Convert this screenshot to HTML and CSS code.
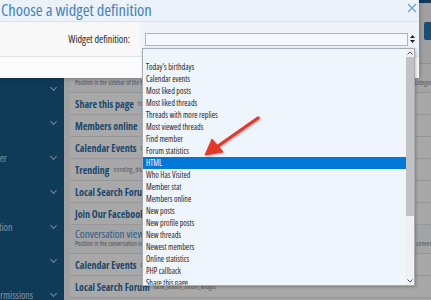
FILE: index.html
```html
<!DOCTYPE html>
<html lang="en">
<head>
<meta charset="UTF-8" />
<meta name="viewport" content="width=device-width, initial-scale=1.0" />
<title>Widgets</title>
<link rel="stylesheet" href="styles.css">
</head>
<body>
<div class="topbar"></div>
<div class="layout">
    <nav class="sidebar">
    <div class="nav-item"><span>Setup</span></div>
    <div class="nav-item"><span>Options</span></div>
    <div class="nav-item"><span>Forums</span></div>
    <div class="nav-item"><span>Nodes</span></div>
    <div class="nav-item"><span>Style manager</span></div>
    <div class="nav-item"><span>Styles</span></div>
    <div class="nav-item"><span>Communication</span></div>
    <div class="nav-item"><span>Tools</span></div>
    <div class="nav-item"><span>Groups &amp; permissions</span></div>
    </nav>

    <main class="main">
    <div class="page-head">
        <h2>Widgets</h2>
        <button class="btn">Add widget</button>
    </div>

    <div class="panel">
        <div class="section-row">
        <div class="section-title">Forum list sidebar</div>
        <div class="section-desc"><span>Position in the sidebar of the forum list</span><span class="end">category</span></div>
        </div>
        <div class="row"><b>Share this page</b><span>forum_overview_share_page</span></div>
        <div class="row"><b>Members online</b><span>forum_overview_members_online</span></div>
        <div class="row"><b>Calendar Events</b><span>calendar_events_sidebar</span></div>
        <div class="row"><b>Trending</b><span>trending_discussions</span></div>
        <div class="row"><b>Local Search Forum</b><span>local_search_forum_widget</span></div>
        <div class="row"><b>Join Our Facebook</b><span>join_facebook_group</span></div>
        <div class="section-row">
        <div class="section-title">Conversation view</div>
        <div class="section-desc"><span>Position in the conversation view sidebar</span><span class="cut">conversation</span></div>
        </div>
        <div class="row"><b>Calendar Events</b><span>calendar_events_conversation</span></div>
        <div class="row"><b>Local Search Forum</b><span>local_search_forum_widget</span></div>
    </div>
    </main>
</div>

<div class="overlay"></div>

<div class="modal">
    <div class="modal-title">
    <h1>Choose a widget definition</h1>
    <svg class="close" width="10" height="10" viewBox="0 0 10 10">
        <path d="M1 1 L9 9 M9 1 L1 9" stroke="#78a6d4" stroke-width="1.5" fill="none" />
    </svg>
    </div>
    <div class="form-row">
    <div class="form-label">Widget definition:</div>
    <div class="form-field">
        <div class="select"></div>
        <svg class="spin" width="5" height="8" viewBox="0 0 5 8">
        <path d="M2.5 0 L5 3 L0 3 Z M0 5 L5 5 L2.5 8 Z" fill="#222" />
        </svg>
    </div>
    </div>
    <div class="modal-footer"></div>
</div>

<div class="dropdown">
    <ul class="options">
    <li>&nbsp;</li>
    <li>Today's birthdays</li>
    <li>Calendar events</li>
    <li>Most liked posts</li>
    <li>Most liked threads</li>
    <li>Threads with more replies</li>
    <li>Most viewed threads</li>
    <li>Find member</li>
    <li>Forum statistics</li>
    <li class="selected">HTML</li>
    <li>Who Has Visited</li>
    <li>Member stat</li>
    <li>Members online</li>
    <li>New posts</li>
    <li>New profile posts</li>
    <li>New threads</li>
    <li>Newest members</li>
    <li>Online statistics</li>
    <li>PHP callback</li>
    <li>Share this page</li>
    </ul>
    <div class="scrollbar">
    <div class="sb-btn">
        <svg width="6" height="4" viewBox="0 0 6 4"><path d="M0.5 3.5 L3 1 L5.5 3.5" stroke="#555" stroke-width="1" fill="none" /></svg>
    </div>
    <div class="sb-thumb"></div>
    <div class="sb-track"></div>
    <div class="sb-btn">
        <svg width="6" height="4" viewBox="0 0 6 4"><path d="M0.5 0.5 L3 3 L5.5 0.5" stroke="#555" stroke-width="1" fill="none" /></svg>
    </div>
    </div>
</div>

<svg class="pointer" width="75" height="55" viewBox="0 0 75 55">
    <line x1="63" y1="8" x2="23" y2="36" stroke="#e3392b" stroke-width="3.2" stroke-linecap="round" />
    <path d="M10 45 L28 42 L17 29 Z" fill="#e3392b" stroke="#e3392b" stroke-width="1" stroke-linejoin="round" />
</svg>
</body>
</html>
```

FILE: styles.css
```css
:root {
--blue: #185886;
--link: #2e6fa6;
--narrow: 82%;
}

body {
margin: 0;
width: 431px;
height: 300px;
overflow: hidden;
position: relative;
font-family: 'Open Sans', 'Noto Sans', sans-serif;
font-stretch: var(--narrow);
background: #f3f3f3;
}

.topbar {
height: 3px;
background: var(--blue);
}

.layout {
display: flex;
height: 297px;
}

/* left admin nav, cut by the window edge */
.sidebar {
flex: none;
width: 124px;
margin-left: -60px;
background: var(--blue);
}

.nav-item {
height: 34.4px;
display: flex;
align-items: center;
justify-content: space-between;
padding: 0 8px 0 18px;
color: #c9dbee;
font-size: 10px;
white-space: nowrap;
}

.nav-item::after {
content: "";
width: 4px;
height: 4px;
border-right: 1.3px solid #b7cde3;
border-bottom: 1.3px solid #b7cde3;
transform: rotate(45deg);
margin-top: -3px;
}

.main {
flex: 1;
min-width: 0;
overflow: hidden;
padding-left: 6px;
}

.page-head {
height: 60px;
display: flex;
align-items: flex-start;
box-sizing: border-box;
padding-top: 19px;
}

.page-head h2 {
flex: 1;
margin: 0;
font-size: 14px;
font-weight: 400;
color: #222;
}

.btn {
flex: none;
width: 70px;
height: 18px;
margin-right: -63px;
padding: 0 8px 0 16px;
border: none;
border-radius: 2px;
background: #2577b1;
color: white;
text-align: left;
white-space: nowrap;
font-family: inherit;
font-size: 9px;
}

.panel {
background: #fff;
border-top: 1px solid #dcdcdc;
}

.section-row {
padding: 3px 0 5px 5px;
border-bottom: 1px solid #e3e3e3;
background: #f7f9fb;
}

.section-title {
font-size: 11px;
line-height: 12px;
color: #4b8cca;
white-space: nowrap;
}

.section-desc {
display: flex;
justify-content: space-between;
font-size: 6.5px;
line-height: 8px;
color: #7f7f7f;
white-space: nowrap;
}

.section-desc .end {
margin-right: -3px;
}

.section-desc .cut {
margin-right: -14px;
}

.row {
height: 22px;
box-sizing: border-box;
display: flex;
align-items: center;
gap: 4px;
padding: 0 5px;
border-bottom: 1px solid #e6e6e6;
white-space: nowrap;
}

.row b {
font-size: 10px;
font-weight: 700;
color: var(--link);
}

.row span {
font-size: 6.5px;
color: #8a8a8a;
}

.overlay {
position: absolute;
inset: 0;
background: rgba(0, 0, 0, 0.34);
}

/* widget chooser dialog */
.modal {
position: absolute;
left: -10px;
top: 0;
width: 429px;
background: #fff;
box-shadow: 0 0 5px rgba(0, 0, 0, 0.35);
}

.modal-title {
height: 22px;
box-sizing: border-box;
display: flex;
justify-content: space-between;
align-items: flex-start;
padding: 0 2px 0 11px;
background: #ebf2f9;
border-bottom: 1px solid #d9e3ed;
}

.modal-title h1 {
margin: 0;
font-size: 16.5px;
line-height: 19px;
font-weight: 400;
color: #3f82c3;
white-space: nowrap;
}

.close {
margin-top: 3px;
}

.form-row {
height: 35px;
box-sizing: border-box;
display: flex;
border-bottom: 1px solid #e2e2e2;
}

.form-label {
width: 150px;
box-sizing: border-box;
padding-right: 10px;
display: flex;
align-items: center;
justify-content: flex-end;
background: #f8f8f8;
font-size: 10px;
color: #252525;
}

.form-field {
flex: 1;
display: flex;
align-items: center;
gap: 2px;
padding-left: 5px;
background: #eef4fa;
}

.select {
width: 263px;
height: 13px;
box-sizing: border-box;
border: 1px solid #a9b6c4;
background: #f4f8fc;
}

.modal-footer {
height: 21px;
background: #fbfbfb;
}

/* open native list of the select */
.dropdown {
position: absolute;
left: 142px;
top: 48px;
width: 273px;
height: 238px;
box-sizing: border-box;
display: flex;
border: 1px solid #a3adb8;
background: #eff5fc;
box-shadow: 1px 1px 3px rgba(0, 0, 0, 0.25);
}

.options {
flex: 1;
margin: 0;
padding: 0;
list-style: none;
overflow: hidden;
}

.options li {
height: 12px;
line-height: 12px;
padding-left: 3px;
font-size: 8px;
color: #1c1c1c;
white-space: nowrap;
}

.options li.selected {
background: #0078d7;
color: white;
}

.scrollbar {
width: 8px;
display: flex;
flex-direction: column;
background: #f0f0f0;
}

.sb-btn {
height: 8px;
display: flex;
align-items: center;
justify-content: center;
}

.sb-thumb {
height: 159px;
background: #c2c2c2;
}

.sb-track {
flex: 1;
}

.pointer {
position: absolute;
left: 195px;
top: 110px;
filter: drop-shadow(1px 1px 1px rgba(0, 0, 0, 0.3));
}
```
